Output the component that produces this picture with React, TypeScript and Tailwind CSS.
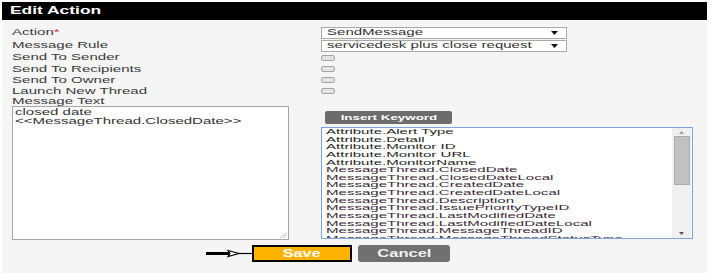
import React from 'react'

const font = "font-['Liberation_Sans',Arial,sans-serif]"

const labels = [
  { text: 'Action', req: true, h: 'h-[13px]' },
  { text: 'Message Rule', h: 'h-[13px]' },
  { text: 'Send To Sender', h: 'h-[11.5px]' },
  { text: 'Send To Recipients', h: 'h-[11px]' },
  { text: 'Send To Owner', h: 'h-[11px]' },
  { text: 'Launch New Thread', h: 'h-[11px]' },
  { text: 'Message Text', h: 'h-[9.5px]' },
]

const keywords = [
  'Attribute.Alert Type',
  'Attribute.Detail',
  'Attribute.Monitor ID',
  'Attribute.Monitor URL',
  'Attribute.MonitorName',
  'MessageThread.ClosedDate',
  'MessageThread.ClosedDateLocal',
  'MessageThread.CreatedDate',
  'MessageThread.CreatedDateLocal',
  'MessageThread.Description',
  'MessageThread.IssuePriorityTypeID',
  'MessageThread.LastModifiedDate',
  'MessageThread.LastModifiedDateLocal',
  'MessageThread.MessageThreadID',
  'MessageThread.MessageThreadStatusType',
]

function Wide({ children, className = '' }: { children: React.ReactNode; className?: string }) {
  // screenshot is stretched horizontally, so widen the glyphs
  return <span className={`inline-block origin-left scale-x-[1.67] whitespace-nowrap ${className}`}>{children}</span>
}

function Select({ value }: { value: string }) {
  return (
    <div className="flex items-center w-[246px] h-[12px] bg-white border border-[#a9a9a9] pl-[5px] pr-[8px]">
      <div className="flex-1 text-[9px] leading-none text-[#333]">
        <Wide>{value}</Wide>
      </div>
      <svg width="7" height="4" viewBox="0 0 7 4">
        <polygon points="0,0 7,0 3.5,4" fill="#111" />
      </svg>
    </div>
  )
}

function Check() {
  return <div className="w-[14px] h-[6px] rounded-[2px] border border-[#a4a4a4] bg-[#e2e2e2]" />
}

export default function App() {
  return (
    <div className={`w-[715px] h-[273px] bg-white pt-[2px] pl-[2px] ${font}`}>
      <div className="w-[705px] h-[271px] bg-[#f5f5f5] flex flex-col">
        {/* Header */}
        <div className="h-[18px] bg-black flex items-center px-[8px] border-b border-[#fafafa] box-content">
          <span className="text-[10px] leading-none font-bold text-white inline-block origin-left scale-x-[1.74] whitespace-nowrap">
            Edit Action
          </span>
        </div>

        {/* Form rows */}
        <div className="pl-[10px] pt-[5px] grid grid-cols-[309px_1fr]">
          {labels.map((l, i) => (
            <React.Fragment key={l.text}>
              <div className={`${l.h} flex items-center text-[9px] leading-none text-[#3a3a3a]`}>
                <Wide>
                  {l.text}
                  {l.req && <span className="text-[#e53935]">*</span>}
                </Wide>
              </div>
              <div className={`${l.h} flex items-center`}>
                {i === 0 && <Select value="SendMessage" />}
                {i === 1 && <Select value="servicedesk plus close request" />}
                {i >= 2 && i <= 5 && <Check />}
              </div>
            </React.Fragment>
          ))}
        </div>

        {/* Message text + keywords */}
        <div className="pl-[10px] flex">
          <div className="relative w-[277px] h-[134px] bg-white border border-[#a6a6a6] pl-[2px] pt-[1px] text-[9px] leading-[9px] text-[#333] overflow-hidden">
            <div><Wide>closed date</Wide></div>
            <div><Wide>&lt;&lt;MessageThread.ClosedDate&gt;&gt;</Wide></div>
            <svg className="absolute right-[1px] bottom-[1px]" width="8" height="6" viewBox="0 0 8 6">
              <line x1="1" y1="6" x2="8" y2="0.5" stroke="#b0b0b0" strokeWidth="0.8" />
              <line x1="4" y1="6" x2="8" y2="3" stroke="#b0b0b0" strokeWidth="0.8" />
            </svg>
          </div>

          <div className="ml-[32px] w-[372px] pt-[5px] flex flex-col">
            <button className="ml-[4px] w-[127px] h-[13px] rounded-[2px] bg-[#6c6c6c] flex items-center justify-center">
              <span className="text-[8px] leading-none font-bold text-white inline-block scale-x-[1.67] whitespace-nowrap">
                Insert Keyword
              </span>
            </button>
            <div className="mt-[3px] h-[112px] bg-white border border-[#7ea3e0] flex">
              <div className="flex-1 overflow-hidden pl-[4px] text-[8px] leading-[7.64px]">
                {keywords.map((k) => (
                  <div key={k} className={k.startsWith('Attr') ? 'text-[#262626]' : 'text-[#3a2838]'}>
                    <span className="inline-block origin-left scale-x-[1.88] whitespace-nowrap">{k}</span>
                  </div>
                ))}
              </div>
              {/* Scrollbar */}
              <div className="w-[19px] mr-[1px] bg-[#f0f0f0] flex flex-col items-center">
                <div className="h-[8px] flex items-center">
                  <svg width="5" height="3" viewBox="0 0 5 3">
                    <polygon points="0,3 5,3 2.5,0" fill="#9a9a9a" />
                  </svg>
                </div>
                <div className="w-[16px] h-[49px] bg-[#c1c1c1] border border-[#ababab]" />
                <div className="flex-1" />
                <div className="h-[10px] flex items-center">
                  <svg width="5" height="3" viewBox="0 0 5 3">
                    <polygon points="0,0 5,0 2.5,3" fill="#555" />
                  </svg>
                </div>
              </div>
            </div>
          </div>
        </div>

        {/* Actions */}
        <div className="pl-[10px] mt-[5px] h-[17px] flex items-center">
          <svg className="ml-[194px]" width="46" height="9" viewBox="0 0 46 9">
            <rect x="0" y="3" width="23" height="3" fill="#000" />
            <polygon points="22,1.5 33,4.5 22,7.5 24,4.5" fill="#fff" stroke="#000" strokeWidth="1.2" />
            <line x1="33" y1="4.5" x2="46" y2="4.5" stroke="#000" strokeWidth="1.2" />
          </svg>
          <button className="w-[100px] h-[17px] bg-[#ffb300] border-2 border-black flex items-center justify-center">
            <span className="text-[10px] leading-none font-bold text-white inline-block scale-x-[1.63]">Save</span>
          </button>
          <button className="ml-[6px] w-[92px] h-[17px] rounded-[3px] bg-[#707070] flex items-center justify-center">
            <span className="text-[10px] leading-none font-bold text-[#f2f2f2] inline-block scale-x-[1.65]">Cancel</span>
          </button>
        </div>
      </div>
    </div>
  )
}
